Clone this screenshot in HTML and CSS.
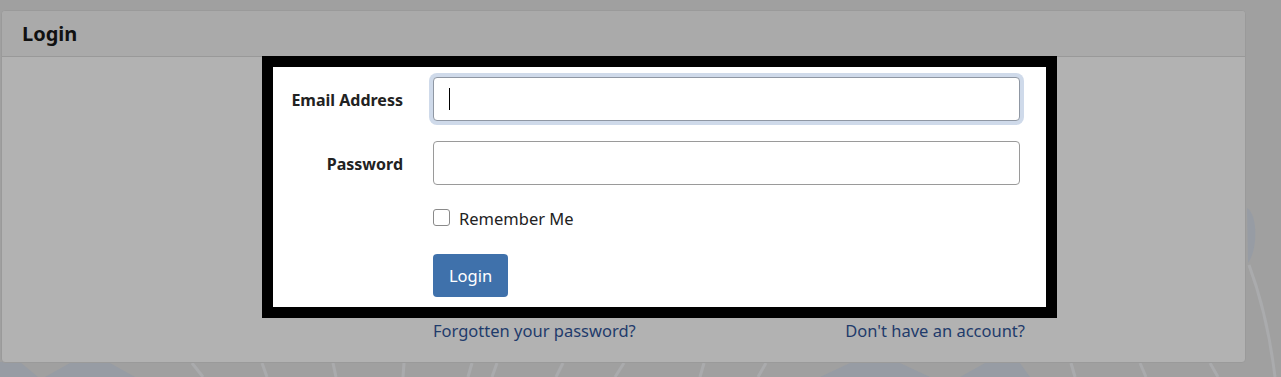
FILE: index.html
```html
<!DOCTYPE html>
<html lang="en">
<head>
    <meta charset="UTF-8">
    <meta name="viewport" content="width=device-width, initial-scale=1.0">
    <title>Login</title>
    <link rel="stylesheet" href="styles.css">
</head>
<body>
    <!-- faint background artwork, only shows round the card -->
    <svg class="bg-art" width="1281" height="377" viewBox="0 0 1281 377">
        <g fill="#979ca4">
            <polygon points="0,362 20,362 38,377 0,377"/>
            <polygon points="45,377 70,363 110,363 135,377"/>
            <polygon points="820,377 850,363 900,363 930,377"/>
            <polygon points="960,377 985,363 1020,363 1030,377"/>
            <path d="M1247,208 C1258,214 1258,250 1248,263 Z"/>
        </g>
        <g fill="none" stroke="#aaabad" stroke-width="3">
            <path d="M192,363 L203,377"/>
            <path d="M262,363 L267,377"/>
            <path d="M333,363 L336,377"/>
            <path d="M404,363 L403,377"/>
            <path d="M472,363 L468,377"/>
            <path d="M497,363 L492,377"/>
            <path d="M563,363 L556,377"/>
            <path d="M624,363 L615,377"/>
            <path d="M704,363 L700,377"/>
            <path d="M766,363 L758,377"/>
            <path d="M1071,363 L1075,377"/>
            <path d="M1140,363 L1146,377"/>
            <path d="M1210,363 L1218,377"/>
            <path d="M1249,265 C1262,300 1270,335 1275,377"/>
        </g>
    </svg>

    <div class="page">
        <div class="card">
            <div class="card-header">
                <h5>Login</h5>
            </div>
            <div class="card-body">
                <form class="login-form">
                    <label class="form-label" for="email">Email Address</label>
                    <div class="field focused">
                        <input class="form-control" type="email" id="email">
                        <span class="caret"></span>
                    </div>

                    <label class="form-label" for="password">Password</label>
                    <div class="field">
                        <input class="form-control" type="password" id="password">
                    </div>

                    <div class="row-offset check-row">
                        <input class="check" type="checkbox" id="remember">
                        <label for="remember">Remember Me</label>
                    </div>

                    <div class="row-offset">
                        <button class="btn" type="button">Login</button>
                    </div>
                </form>
                <div class="links">
                    <a href="#">Forgotten your password?</a>
                    <a href="#">Don't have an account?</a>
                </div>
            </div>
        </div>
    </div>
</body>
</html>
```

FILE: styles.css
```css
*{
    margin: 0;
    padding: 0;
    box-sizing: border-box;
}
a{
    text-decoration: none;
}
body{
    background-color: #a0a0a0;
    font-family: "Noto Sans", "Open Sans", sans-serif;
    font-size: 16.5px;
    color: #222;
    position: relative;
    height: 377px;
    overflow: hidden;
}
.bg-art{
    position: absolute;
    top: 0;
    left: 0;
}

.page{
    position: relative;
    padding: 10px 35px 0 1px;
}
.card{
    border: 1px solid #9a9a9a;
    border-radius: 4px;
    background-color: #b2b2b2;
}
.card-header{
    height: 46px;
    background-color: #aaaaaa;
    border-bottom: 1px solid #999;
    border-radius: 4px 4px 0 0;
    display: flex;
    align-items: center;
    padding-left: 20px;
}
.card-header h5{
    font-size: 20px;
    font-weight: 700;
    color: #111;
}

/* highlighted form */
.login-form{
    width: 795px;
    margin-top: -1px;
    margin-left: 260px;
    border: 11px solid #000;
    background-color: #fff;
    padding: 10px 26px 10px 0;
    display: grid;
    grid-template-columns: 130px 587px;
    column-gap: 30px;
    row-gap: 20px;
}
.form-label{
    font-size: 16px;
    font-weight: 700;
    text-align: right;
    align-self: center;
    padding-top: 1px;
}
.field{
    position: relative;
}
.form-control{
    display: block;
    width: 100%;
    height: 44px;
    border: 1px solid #9a9a9a;
    border-radius: 4px;
    font: inherit;
    padding: 0 12px;
    outline: none;
}
.focused .form-control{
    border-color: #8f97a3;
    box-shadow: 0 0 0 4px #cfdaea;
}
.caret{
    position: absolute;
    left: 16px;
    top: 11px;
    width: 1px;
    height: 22px;
    background-color: #000;
}
.row-offset{
    grid-column: 2;
}
.check-row{
    display: flex;
    align-items: center;
    gap: 9px;
    height: 24px;
    margin-bottom: 5px;
}
.check-row label{
    padding-top: 2px;
}
.check{
    appearance: none;
    width: 17px;
    height: 17px;
    border: 1px solid #8a8a8a;
    border-radius: 3px;
    background-color: #fff;
}
.btn{
    height: 43px;
    width: 75px;
    border: none;
    border-radius: 4px;
    background-color: #3f71ab;
    color: #fff;
    font: inherit;
}

.links{
    width: 592px;
    margin-left: 431px;
    display: flex;
    justify-content: space-between;
    line-height: 24px;
    padding-top: 1px;
    padding-bottom: 19px;
}
.links a{
    color: #1f3b6b;
}
```
